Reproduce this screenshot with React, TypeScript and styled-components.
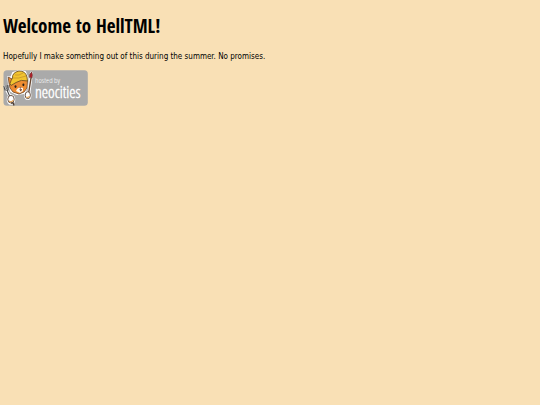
import React from "react";
import styled, { createGlobalStyle } from "styled-components";

const GlobalStyle = createGlobalStyle`
  body {
    margin: 0;
    background: #f9e0b5;
    color: #000;
    font-family: "DejaVu Sans Condensed", "DejaVu Sans", Verdana, sans-serif;
  }
`;

const Page = styled.main`
  padding: 15px 3px;
`;

const Title = styled.h1`
  margin: 0 0 13px;
  font-family: "Open Sans Condensed", "DejaVu Sans Condensed", sans-serif;
  font-size: 19px;
  line-height: 22px;
`;

const Intro = styled.p`
  margin: 0 0 7px;
  font-size: 8px;
  line-height: 13px;
`;

const HostLink = styled.a`
  display: block;
  width: fit-content;
`;

const Badge = styled.svg`
  display: block;
  width: 85px;
  height: 36px;
`;

const BadgeText = styled.text`
  font-family: "Open Sans Condensed Light", "Open Sans", sans-serif;
  font-weight: 300;
  fill: #fff;
`;

const BadgeName = styled(BadgeText)`
  stroke: #fff;
  stroke-width: 0.4;
`;

function NeocitiesBadge() {
  return (
    <Badge viewBox="0 0 85 36" role="img" aria-label="Hosted by Neocities">
      <rect x="0.5" y="0.3" width="84.3" height="35.4" rx="3.5" fill="#aaaaaa" />
      <g stroke="#fff" strokeWidth="2" strokeLinecap="round" strokeLinejoin="round" fill="#fff">
        <path d="M5.2 7 8 8 10 3 17 1 22 2 24.5 8 24.5 16 21 23 14 24 8 21 6 14Z" />
        <path d="M28.5 3 26 22M2 17 8 28" strokeWidth="3" />
        <ellipse cx="24.8" cy="25.5" rx="2.6" ry="3.5" />
        <ellipse cx="8" cy="29.5" rx="3.3" ry="4.3" />
      </g>
      <path
        d="M5.2 7 9 9 22 8 24.5 11 24 18 21 22 16 24 10 22 7 18 6 13Z"
        fill="#ee8c32"
        stroke="#684327"
        strokeWidth="0.8"
      />
      <path d="M14 19 17 17 20 18 20 21 17 23 13 21Z" fill="#fff4e5" />
      <path
        d="M7 13.5Q8 10 9.5 8Q9 2.5 16 1Q22.5 0.8 24 7L24.5 11Q18 9 13 12.5L8 15.5Z"
        fill="#f2c42f"
        stroke="#725423"
        strokeWidth="0.9"
      />
      <path d="M9.5 8Q15 9 23 6M12 5Q16 6 20 3" fill="none" stroke="#b68528" strokeWidth="0.6" />
      <ellipse cx="12.5" cy="16.6" rx="1" ry="1.4" fill="#292019" />
      <ellipse cx="20.4" cy="14.8" rx="1" ry="1.4" fill="#292019" />
      <path d="M16 17.6 18.5 17.2 17.6 18.8ZM16.2 19.5 19 19 18 21.6Z" fill="#603024" />
      <path d="M28 8 25.8 22" stroke="#67452e" strokeWidth="1.4" />
      <path d="M26.6 7.5Q26 4 28.8 1.8Q30 5 29 8Z" fill="#b5202b" stroke="#57352e" strokeWidth="0.6" />
      <ellipse cx="24.8" cy="25.2" rx="2.6" ry="3.5" fill="#fff" stroke="#5a4336" strokeWidth="0.9" />
      <path d="M23.4 27Q25 28.2 26.6 26" fill="none" stroke="#e5a659" strokeWidth="1.2" />
      <path d="M0.8 16 2 20 5 20 4.8 15M2.8 15.5 3.3 19M4 20 7 27" fill="none" stroke="#4b4b4b" strokeWidth="1.1" />
      <ellipse cx="8" cy="29.2" rx="3.2" ry="3.8" fill="#fff" stroke="#5a4336" strokeWidth="0.9" />
      <path d="M6 31Q8.5 33 10.4 30" fill="none" stroke="#e5a659" strokeWidth="1.3" />
      <path d="M8 33.2 10.3 33 11 35.5" fill="none" stroke="#4c3c31" strokeWidth="1.2" />
      <BadgeText x="32" y="13" fontSize="8">hosted by</BadgeText>
      <BadgeName x="32" y="28" fontSize="16">neocities</BadgeName>
    </Badge>
  );
}

export default function App() {
  return (
    <>
      <GlobalStyle />
      <Page>
        <Title>Welcome to HellTML!</Title>
        <Intro>Hopefully I make something out of this during the summer. No promises.</Intro>
        <HostLink href="https://neocities.org">
          <NeocitiesBadge />
        </HostLink>
      </Page>
    </>
  );
}
